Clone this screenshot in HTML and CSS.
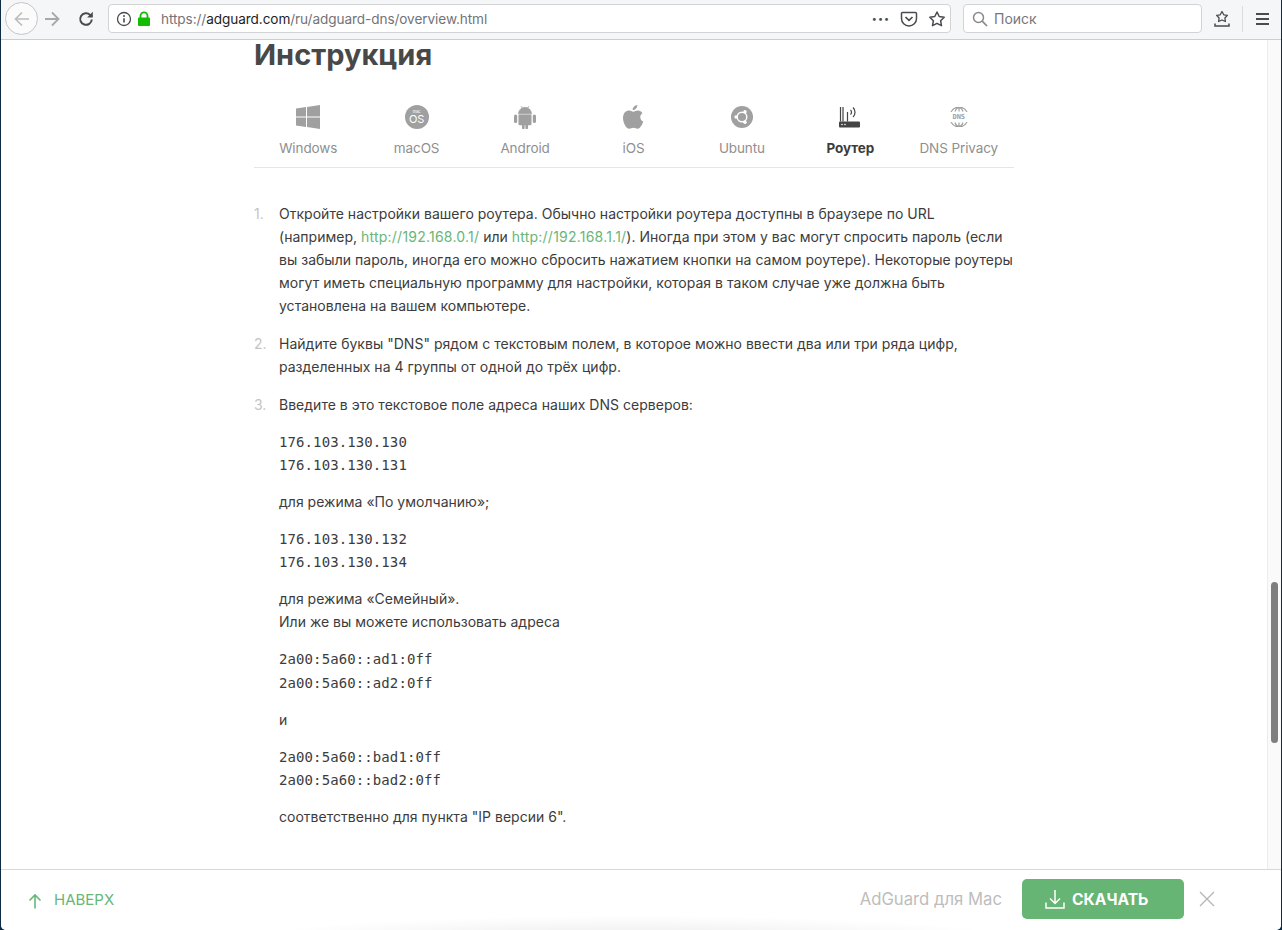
FILE: index.html
```html
<!DOCTYPE html>
<html lang="ru">
<head>
<meta charset="utf-8">
<title>AdGuard DNS</title>
<link rel="stylesheet" href="styles.css">
</head>
<body>
<div class="window">
  <header class="toolbar">
    <button class="nav-back" aria-label="Назад"><svg width="20" height="20" viewBox="0 0 20 20"><path d="M17 10H4M10 3.500L3.500 10 10 16.500" class="ic-light"/></svg></button>
    <span class="nav-forward"><svg width="20" height="20" viewBox="0 0 20 20"><path d="M3 10h13M10 3.500l6.500 6.500-6.500 6.500" class="ic-mid"/></svg></span>
    <span class="nav-reload"><svg width="18" height="18" viewBox="0 0 18 18"><path d="M14.800 9.500a5.800 5.800 0 1 1-1.700-4.600L15 6.500" class="ic-dark"/><path d="M15.800 1.800v5.700h-5.700z" fill="#4a4a4f"/></svg></span>
    <div class="urlbar">
      <svg class="ic-info" width="16" height="16" viewBox="0 0 16 16"><circle cx="8" cy="8" r="6.500" fill="none" stroke="#4a4a4f" stroke-width="1.300"/><path d="M8 7.200v4.300" stroke="#4a4a4f" stroke-width="1.600"/><circle cx="8" cy="4.900" r="1" fill="#4a4a4f"/></svg>
      <svg class="ic-lock" width="14" height="16" viewBox="0 0 14 16"><path d="M3.500 7V4.800a3.500 3.500 0 0 1 7 0V7" fill="none" stroke="#12bc00" stroke-width="1.800"/><rect x="1" y="6.500" width="12" height="8.500" rx="1" fill="#12bc00"/></svg>
      <span class="url"><span class="url-dim">https://</span>adguard.com<span class="url-dim">/ru/adguard-dns/overview.html</span></span>
      <span class="url-dots">•••</span>
      <svg class="ic-pocket" width="18" height="18" viewBox="0 0 18 18"><path d="M2.500 2.500h13a1 1 0 0 1 1 1v5a7.500 7.500 0 0 1-15 0v-5a1 1 0 0 1 1-1z" fill="none" stroke="#4a4a4f" stroke-width="1.500"/><path d="M5.500 7L9 10.300 12.500 7" fill="none" stroke="#4a4a4f" stroke-width="1.700"/></svg>
      <svg class="ic-star" width="18" height="18" viewBox="0 0 18 18"><path d="M9 2l2.200 4.500 5 .7-3.600 3.500.9 5L9 13.300l-4.500 2.400.9-5L1.800 7.200l5-.7z" fill="none" stroke="#4a4a4f" stroke-width="1.500" stroke-linejoin="round"/></svg>
    </div>
    <div class="searchbar">
      <svg width="16" height="16" viewBox="0 0 16 16"><circle cx="6.500" cy="6.500" r="5" fill="none" stroke="#8a8a8e" stroke-width="1.500"/><path d="M10.200 10.200L15 15" stroke="#8a8a8e" stroke-width="1.700"/></svg>
      <span class="search-text">Поиск</span>
    </div>
    <svg class="ic-library" width="16" height="18" viewBox="0 0 16 18"><path d="M8 1.500l1.800 3.300 3.600.6-2.500 2.600.5 3.500L8 10l-3.400 1.500.5-3.500-2.500-2.600 3.600-.6z" fill="none" stroke="#4a4a4f" stroke-width="1.300" stroke-linejoin="round"/><path d="M1 13.500v2.500h14v-2.500" fill="none" stroke="#4a4a4f" stroke-width="1.500"/></svg>
    <span class="tb-divider"></span>
    <span class="hamburger"><i></i><i></i><i></i></span>
  </header>

  <div class="viewport">
    <main class="page">
      <div class="content">
        <h1 class="title">Инструкция</h1>
        <nav class="tabs">
          <div class="tab">
            <svg class="tab-icon" width="24" height="24" viewBox="0 0 24 24"><path d="M0 3.500l10-1.400v9.300H0zM11 2l13-2v11.400H11zM0 12.600h10v9.400L0 20.600zM11 12.600h13V24l-13-1.900z" fill="#a0a0a0"/></svg>
            <span>Windows</span>
          </div>
          <div class="tab">
            <div class="mac-badge"><span class="mac-small">mac</span><span class="mac-os">OS</span></div>
            <span>macOS</span>
          </div>
          <div class="tab">
            <svg class="tab-icon" width="24" height="24" viewBox="0 0 24 24"><path d="M5.500 8.800a6.500 6.500 0 0 1 13 0zM8 1l1.700 2.800M16 1l-1.700 2.800" fill="#a0a0a0" stroke="#a0a0a0" stroke-width=".7"/><path d="M5.500 9.600h13v9.400a1.300 1.300 0 0 1-1.300 1.300H15v2.700a1.300 1.300 0 0 1-2.600 0v-2.700h-.8v2.700a1.300 1.300 0 0 1-2.600 0v-2.700H6.800A1.300 1.300 0 0 1 5.500 19z" fill="#a0a0a0"/><rect x="1" y="9.600" width="3.200" height="8.500" rx="1.600" fill="#a0a0a0"/><rect x="19.800" y="9.600" width="3.200" height="8.500" rx="1.600" fill="#a0a0a0"/></svg>
            <span>Android</span>
          </div>
          <div class="tab">
            <svg class="tab-icon" width="24" height="24" viewBox="0 0 24 24"><path d="M16.300 0c.2 2.700-2 5-4.600 5.100C11.400 2.600 13.800.2 16.300 0zM21.500 8.200c-3.300 2-2.800 6.800.8 8.400-.9 2.500-3 7.200-5.500 7.200-1.500.1-2.500-1-4.300-1s-2.800 1-4.300 1C5.300 23.800 2 17.900 2 13c0-5 3.300-7.400 6-7.400 1.700 0 3 1.100 4.300 1.100 1.200 0 2.800-1.300 4.800-1.200 1.800.1 3.300.8 4.400 2.700z" fill="#a0a0a0"/></svg>
            <span>iOS</span>
          </div>
          <div class="tab">
            <svg class="tab-icon" width="24" height="24" viewBox="0 0 24 24"><circle cx="12" cy="12" r="11" fill="#a0a0a0"/><circle cx="12" cy="12" r="4.800" fill="none" stroke="#fff" stroke-width="1.400"/><circle cx="6" cy="12" r="1.700" fill="#fff"/><circle cx="15" cy="6.800" r="1.700" fill="#fff"/><circle cx="15" cy="17.200" r="1.700" fill="#fff"/></svg>
            <span>Ubuntu</span>
          </div>
          <div class="tab tab-active">
            <svg class="tab-icon" width="24" height="24" viewBox="0 0 24 24"><rect x="1" y="16.500" width="21" height="6" rx="1" fill="#444"/><path d="M2.500 2v14.500M5 2v14.500M9.500 7v9.500" stroke="#444" stroke-width="1.200" fill="none"/><path d="M12.500 5c1.300 1.200 1.300 3.300 0 4.500M15 2.500c2.700 2.500 2.700 7 0 9.500" stroke="#444" stroke-width="1.200" fill="none"/><circle cx="4" cy="19.500" r=".8" fill="#fff"/><circle cx="7" cy="19.500" r=".8" fill="#fff"/></svg>
            <span>Роутер</span>
          </div>
          <div class="tab">
            <div class="dns-badge">
              <svg class="dns-arc" width="18" height="5" viewBox="0 0 18 5"><path d="M1 5a9 9 0 0 1 16 0M5 4.500C6 1.500 7.500.6 9 .6s3 .9 4 3.900M9 .6v4" fill="none" stroke="#a0a0a0" stroke-width="1.200"/></svg>
              <span class="dns-text">DNS</span>
              <svg class="dns-arc" width="18" height="5" viewBox="0 0 18 5"><path d="M1 0a9 9 0 0 0 16 0M5 .5C6 3.500 7.500 4.400 9 4.400s3-.9 4-3.900M9 .5v4" fill="none" stroke="#a0a0a0" stroke-width="1.200"/></svg>
            </div>
            <span>DNS Privacy</span>
          </div>
        </nav>
        <ol class="steps">
          <li>
            <div class="step-body">
              <p>Откройте настройки вашего роутера. Обычно настройки роутера доступны в браузере по URL (например, <a href="#">http://192.168.0.1/</a> или <a href="#">http://192.168.1.1/</a>). Иногда при этом у вас могут спросить пароль (если вы забыли пароль, иногда его можно сбросить нажатием кнопки на самом роутере). Некоторые роутеры могут иметь специальную программу для настройки, которая в таком случае уже должна быть установлена на вашем компьютере.</p>
            </div>
          </li>
          <li>
            <div class="step-body">
              <p>Найдите буквы "DNS" рядом с текстовым полем, в которое можно ввести два или три ряда цифр, разделенных на 4 группы от одной до трёх цифр.</p>
            </div>
          </li>
          <li>
            <div class="step-body">
              <p>Введите в это текстовое поле адреса наших DNS серверов:</p>
              <p class="mono">176.103.130.130<br>176.103.130.131</p>
              <p>для режима «По умолчанию»;</p>
              <p class="mono">176.103.130.132<br>176.103.130.134</p>
              <p>для режима «Семейный».<br>Или же вы можете использовать адреса</p>
              <p class="mono">2a00:5a60::ad1:0ff<br>2a00:5a60::ad2:0ff</p>
              <p>и</p>
              <p class="mono">2a00:5a60::bad1:0ff<br>2a00:5a60::bad2:0ff</p>
              <p>соответственно для пункта "IP версии 6".</p>
            </div>
          </li>
        </ol>
      </div>
    </main>
    <div class="scrolltrack"><div class="scrollthumb"></div></div>
  </div>

  <footer class="bottombar">
    <a class="totop" href="#">
      <svg width="14" height="16" viewBox="0 0 14 16"><path d="M7 15.500V2M1.500 7.500L7 2l5.500 5.500" fill="none" stroke="#68b678" stroke-width="1.600"/></svg>
      <span>НАВЕРХ</span>
    </a>
    <span class="product">AdGuard для Мас</span>
    <a class="download" href="#">
      <svg width="20" height="20" viewBox="0 0 20 20"><path d="M10 1v13M5 9.500l5 5 5-5M1 13.500V19h18v-5.500" fill="none" stroke="#fff" stroke-width="1.500"/></svg>
      <span>СКАЧАТЬ</span>
    </a>
    <svg class="close" width="16" height="16" viewBox="0 0 16 16"><path d="M1 1l14 14M15 1L1 15" stroke="#b5b5b5" stroke-width="1.300"/></svg>
  </footer>
</div>
</body>
</html>
```
FILE: styles.css
```css
* { box-sizing: border-box; }
html, body { margin: 0; height: 100%; overflow: hidden; }
body {
  background: #0d2c44;
  font-family: Inter, "Liberation Sans", sans-serif;
  color: #3c3c3c;
}
.window {
  height: 930px;
  margin: 0 1px 0 1px;
  background: #fff;
  border-radius: 0 0 5px 5px;
  display: flex;
  flex-direction: column;
  overflow: hidden;
}
.toolbar {
  height: 40px;
  flex: none;
  background: #f5f6f7;
  border-bottom: 1px solid #cdcdcf;
  display: flex;
  align-items: center;
  padding: 0 0 2px 4px;
}
.nav-back {
  width: 33px;
  height: 33px;
  padding: 0;
  border-radius: 50%;
  border: 1px solid #c6c6c8;
  background: #fbfbfb;
  display: flex;
  align-items: center;
  justify-content: center;
  margin-right: 4px;
  flex: none;
}
.ic-light { fill: none; stroke: #bdbdbf; stroke-width: 1.700; }
.ic-mid { fill: none; stroke: #a8a8aa; stroke-width: 1.800; }
.ic-dark { fill: none; stroke: #4a4a4f; stroke-width: 2; }
.nav-forward { display: flex; margin-right: 15px; }
.nav-reload { display: flex; margin-right: 13px; }
.urlbar, .searchbar {
  height: 29px;
  background: #fff;
  border: 1px solid #d2d3d5;
  border-radius: 4px;
  display: flex;
  align-items: center;
}
.urlbar { width: 843px; padding: 0 4px 0 7px; margin-right: 12px; }
.ic-lock { margin-left: 5px; }
.url {
  margin-left: 10px;
  font-size: 13.600px;
  letter-spacing: -.08px;
  color: #1d1d1f;
  white-space: nowrap;
  flex: 1;
}
.url-dim { color: #737377; }
.url-dots { font-size: 9px; letter-spacing: 1px; color: #4a4a4f; margin-right: 10px; }
.ic-pocket { margin-right: 10px; }
.searchbar { width: 239px; padding: 0 8px; margin-right: 12px; }
.search-text { font-size: 14px; color: #77777b; margin-left: 6px; }
.ic-library { flex: none; }
.tb-divider { width: 1px; height: 26px; background: #dcdcde; margin: 0 13px 0 12px; flex: none; }
.hamburger { display: flex; flex-direction: column; gap: 3px; width: 13px; }
.hamburger i { height: 2px; background: #4a4a4f; display: block; }

.viewport {
  flex: 1;
  min-height: 0;
  display: flex;
}
.page {
  flex: 1;
  min-width: 0;
  overflow: hidden;
}
.content {
  width: 760px;
  margin-left: 253px;
}
.title {
  margin: 0;
  font-size: 29px;
  line-height: 30px;
  font-weight: 700;
  letter-spacing: 0;
  color: #484848;
}
.tabs {
  margin-top: 35px;
  display: grid;
  grid-template-columns: repeat(7, 1fr);
  border-bottom: 1px solid #e6e6e6;
  height: 63px;
  padding-right: 1px;
}
.tab {
  display: flex;
  flex-direction: column;
  align-items: center;
  font-size: 13.500px;
  line-height: 20px;
  letter-spacing: -.1px;
  color: #8f8f8f;
}
.tab > span { margin-top: 9px; }
.tab-icon, .mac-badge, .dns-badge { height: 24px; flex: none; }
.tab-active { color: #3c3c3c; font-weight: 700; }
.mac-badge {
  width: 24px;
  border-radius: 50%;
  background: #a0a0a0;
  color: #fff;
  display: flex;
  flex-direction: column;
  align-items: center;
  justify-content: center;
  font-weight: 400;
}
.mac-small { font-size: 4px; line-height: 4px; }
.mac-os { font-size: 11px; line-height: 11px; }
.dns-badge {
  width: 24px;
  display: flex;
  flex-direction: column;
  align-items: center;
  justify-content: center;
  gap: 1px;
}
.dns-text {
  font-family: "DejaVu Sans Mono", monospace;
  font-size: 7px;
  line-height: 8px;
  font-weight: 700;
  color: #a0a0a0;
}
.steps {
  margin: 34px 0 0;
  padding: 0;
  list-style: none;
  counter-reset: step;
  font-size: 14px;
  line-height: 23.100px;
  letter-spacing: .02px;
  color: #3c3c3c;
}
.steps li {
  counter-increment: step;
  display: grid;
  grid-template-columns: 25px 1fr;
  margin-bottom: 14.500px;
}
.steps li::before {
  content: counter(step) ".";
  color: #c4c4c4;
}
.steps p { margin: 0 0 14px; }
.step-body p:last-child { margin-bottom: 0; }
.steps a { color: #68b678; text-decoration: none; letter-spacing: .22px; }
.steps p.mono {
  font-family: "DejaVu Sans Mono", monospace;
  letter-spacing: .1px;
  padding-top: 1px;
  margin-bottom: 13px;
}

.scrolltrack {
  width: 14px;
  flex: none;
  background: #fafafa;
  border-left: 1px solid #ececec;
  padding: 542px 3px 0 3px;
}
.scrollthumb { height: 161px; border-radius: 4px; background: #7e7e7e; }

.bottombar {
  height: 61px;
  flex: none;
  background: #fff;
  border-top: 1px solid #d8d8d8;
  display: flex;
  align-items: center;
  position: relative;
  padding: 0 0 2px 27px;
}
.bottombar::before {
  content: "";
  position: absolute;
  left: 250px;
  right: 270px;
  bottom: -30px;
  height: 44px;
  background: radial-gradient(closest-side, #ececec, rgba(255, 255, 255, 0));
}
.bottombar > * { position: relative; }
.totop {
  display: flex;
  align-items: center;
  gap: 12px;
  color: #68b678;
  font-size: 15px;
  text-decoration: none;
  flex: 1;
}
.totop svg { margin-top: 4px; }
.product { font-size: 16.700px; color: #bdbdbd; margin-right: 20px; }
.download {
  width: 162px;
  height: 40px;
  border-radius: 5px;
  background: #66b574;
  color: #fff;
  font-size: 15.600px;
  font-weight: 700;
  display: flex;
  align-items: center;
  gap: 7px;
  padding-left: 23px;
  text-decoration: none;
  margin-right: 15px;
}
.close { margin-right: 66px; }
```
